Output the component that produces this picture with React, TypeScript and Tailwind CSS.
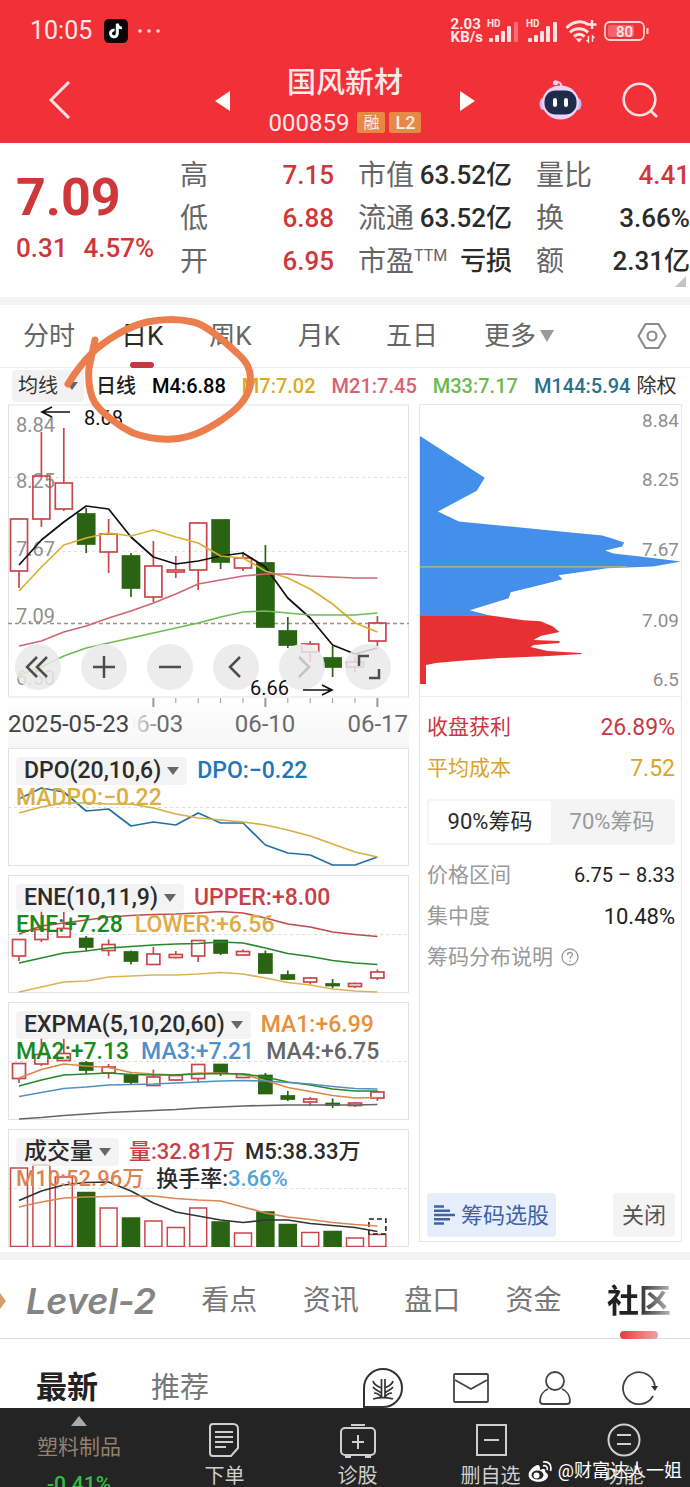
import { ReactNode } from "react";

type Candle = [open: number, close: number, high: number, low: number, up: boolean];

const RED = "#c9474b";
const GREEN = "#2a6412";

const x = (i: number) => 11 + i * 22.4;

const dayCandles: Candle[] = [
    [115, 167, 115, 184, true],
    [72, 115, 28, 123, true],
    [79, 105, 24, 107, true],
    [110, 140, 104, 149, false],
    [130, 148, 115, 169, true],
    [152, 184, 149, 193, false],
    [162, 193, 137, 198, true],
    [166, 168, 152, 174, true],
    [119, 166, 118, 186, true],
    [116, 158, 116, 165, false],
    [154, 164, 148, 167, true],
    [159, 223, 141, 223, false],
    [227, 241, 213, 244, false],
    [240, 248, 237, 258, true],
    [254, 263, 242, 273, false],
    [258, 263, 253, 268, true],
    [219, 237, 212, 242, true],
];

const eneCandles: Candle[] = [
    [64.5, 81, 64.5, 86, true],
    [54.5, 64.5, 35.5, 67, true],
    [53.5, 62, 37, 62, true],
    [63.5, 72, 61, 76, false],
    [69.5, 75.5, 64.5, 81, true],
    [77, 86, 75.5, 89.5, false],
    [79, 89.5, 72, 90, true],
    [79.5, 82.5, 76, 83.5, true],
    [65.5, 81, 65.5, 87, true],
    [65.5, 78, 65.5, 80, false],
    [76.5, 80, 74.5, 81, true],
    [79, 98, 75.5, 98, false],
    [100, 104, 95.5, 105, false],
    [103, 107, 102, 109.5, true],
    [109, 110.5, 104, 113.5, false],
    [108.5, 111.5, 107.5, 113, true],
    [97, 103, 94.5, 105, true],
];

const expmaCandles: Candle[] = [
    [61.5, 76.5, 61.5, 81, true],
    [52.5, 62, 36, 64, true],
    [51.5, 58.5, 36.5, 58.5, true],
    [61, 68, 59, 72, false],
    [65, 71, 62, 76.5, true],
    [73, 80, 71.5, 82, false],
    [75, 83.5, 67.5, 84, true],
    [73.5, 78, 73, 79, true],
    [62.5, 76.5, 62.5, 81, true],
    [62.5, 70.5, 62.5, 74, false],
    [72.5, 75.5, 71, 76, true],
    [73.5, 91.5, 71, 91.5, false],
    [94, 97, 89, 99, false],
    [97, 100, 95, 103.5, true],
    [101.5, 103, 96.5, 106, false],
    [101, 103.5, 100, 105, true],
    [90, 96, 88.5, 99, true],
];

const volumes = [39, 36, 48, 63.5, 79, 89, 92, 98.5, 79, 93, 104, 83, 95.5, 103.5, 102.5, 109, 105.5];

const quotes = [
    { label: "高", value: "7.15", color: "text-[#d0373b]" },
    { label: "市值", value: "63.52亿", color: "text-[#2b2b2b]" },
    { label: "量比", value: "4.41", color: "text-[#d0373b]" },
    { label: "低", value: "6.88", color: "text-[#d0373b]" },
    { label: "流通", value: "63.52亿", color: "text-[#2b2b2b]" },
    { label: "换", value: "3.66%", color: "text-[#2b2b2b]" },
    { label: "开", value: "6.95", color: "text-[#d0373b]" },
    { label: "市盈", sup: "TTM", value: "亏损", color: "text-[#2b2b2b]" },
    { label: "额", value: "2.31亿", color: "text-[#2b2b2b]" },
];

function Line({ points, color }: { points: number[]; color: string }) {
    return (
        <polyline
            points={points.map((y, i) => `${x(i)},${y}`).join(" ")}
            fill="none"
            stroke={color}
            strokeWidth="1.7"
            strokeLinejoin="round"
        />
    );
}

function Candles({ data, width }: { data: Candle[]; width: number }) {
    return (
        <g strokeWidth="1.7">
            {data.map(([top, bottom, high, low, up], i) => {
                const color = up ? RED : GREEN;
                return (
                    <g key={i} stroke={color}>
                        <path d={`M${x(i)} ${high}V${top}M${x(i)} ${bottom}V${low}`} />
                        <rect
                            x={x(i) - width / 2}
                            y={top}
                            width={width}
                            height={bottom - top}
                            fill={up ? "none" : GREEN}
                        />
                    </g>
                );
            })}
        </g>
    );
}

function Caret() {
    return (
        <svg viewBox="0 0 12 8" className="h-2 w-3 shrink-0" aria-hidden="true">
            <path d="M0 0h12L6 8z" fill="#666" />
        </svg>
    );
}

function IndicatorButton({ children }: { children: ReactNode }) {
    return (
        <button className="flex h-7 items-center gap-1.5 rounded bg-[#f0f0f0]/80 px-2 text-[#2b2b2b]">
            {children}
            <Caret />
        </button>
    );
}

function Panel({ top, bottom, children }: { top: ReactNode; bottom: ReactNode; children: ReactNode }) {
    return (
        <section className="relative">
            <svg viewBox="0 0 401 118" className="block w-full">
                <rect x="0.5" y="0.5" width="400" height="117" fill="none" stroke="#e3e3e3" />
                <path d="M0 59.5H401" stroke="#ddd" strokeDasharray="3 3" />
                {children}
            </svg>
            <div className="absolute top-[9px] left-2 text-[23px] leading-[26px] font-medium whitespace-nowrap">
                <div className="flex h-7 items-center gap-2.5">{top}</div>
                <div className="flex gap-3">{bottom}</div>
            </div>
        </section>
    );
}

function SignalBars({ faded }: { faded?: boolean }) {
    return (
        <svg viewBox="0 0 33 24" className="h-6 w-[33px]" fill="#ffe3e3">
            <text x="0" y="8" fontSize="10" fontWeight="700">HD</text>
            <rect x="2" y="19" width="4" height="4" rx="1" />
            <rect x="8" y="16" width="4" height="7" rx="1" />
            <rect x="14" y="12" width="4" height="11" rx="1" />
            <rect x="20" y="7" width="4" height="16" rx="1" />
            <rect x="27" y="3" width="4" height="20" rx="1" opacity={faded ? 0.35 : 1} />
        </svg>
    );
}

function StatusBar() {
    return (
        <div className="flex h-[62px] items-center pr-[41px] pl-[30px] text-[#ffe9e9]">
            <span className="text-[25px]">10:05</span>
            <svg viewBox="0 0 24 24" className="ml-3 size-6">
                <rect width="24" height="24" rx="5" fill="#0d0507" />
                <path d="M13 5v9.500a3.400 3.400 0 1 1-3-3.400" fill="none" stroke="#3ee" strokeWidth="2.600" />
                <path d="M13.500 4.500v10a3.400 3.400 0 1 1-3-3.400M13.500 5c.4 2.600 2 3.900 4.500 4" fill="none" stroke="#fff" strokeWidth="2.600" />
            </svg>
            <svg viewBox="0 0 22 4" className="ml-2.5 h-1 w-[22px]" fill="#ffd8d8">
                <circle cx="2" cy="2" r="1.800" />
                <circle cx="11" cy="2" r="1.800" />
                <circle cx="20" cy="2" r="1.800" />
            </svg>
            <div className="ml-auto flex flex-col text-[15px] leading-[13px] font-bold">
                <span>2.03</span>
                <span>KB/s</span>
            </div>
            <div className="ml-1 flex items-center gap-1.5">
                <SignalBars faded />
                <SignalBars />
                <svg viewBox="0 0 32 26" className="h-[26px] w-8" fill="none" stroke="#ffe3e3" strokeWidth="3">
                    <path d="M1.500 10C8 3 17 2 23 6.500M5 14.500c5-5 13-5 18 0M9 18.500c3.500-3 7-3 10.500 0" />
                    <path d="M10.500 20.500h7L14 24.500z" fill="#ffe3e3" stroke="none" />
                    <path d="M27 2v9M22.500 6.500h9" strokeWidth="2.500" />
                    <path d="M23.500 18v6l-2-2M27.500 24v-6l2 2" strokeWidth="1.400" />
                </svg>
            </div>
            <svg viewBox="0 0 45 20" className="ml-[7px] h-5 w-[45px]">
                <rect x="1" y="1" width="39" height="18" rx="5" fill="none" stroke="#ffd5d5" strokeWidth="1.800" />
                <rect x="4" y="4" width="26" height="12" rx="2" fill="#fff" opacity="0.250" />
                <path d="M43.500 7v6" stroke="#ffd5d5" strokeWidth="2" />
                <text x="20.500" y="15.500" fontSize="15" fontWeight="500" textAnchor="middle" fill="#ffe9e9">80</text>
            </svg>
        </div>
    );
}

function Header() {
    return (
        <header className="bg-[#f23037]">
            <StatusBar />
            <div className="grid h-[81px] grid-cols-[1fr_260px_1fr] items-center">
                <button aria-label="返回" className="ml-12 w-6 pb-1.5">
                    <svg viewBox="0 0 24 38" className="h-[38px] w-6" fill="none" stroke="#ffe3e3" strokeWidth="3">
                        <path d="M21 1 3 19l18 18" />
                    </svg>
                </button>
                <div className="flex items-center justify-between">
                    <button aria-label="上一只" className="pb-1">
                        <svg viewBox="0 0 15 20" className="h-5 w-[15px]"><path d="M15 0v20L0 10z" fill="#fff" /></svg>
                    </button>
                    <div className="flex flex-col items-center text-[#ffe9e9]">
                        <h1 className="text-[29px] leading-10 font-medium">国风新材</h1>
                        <div className="flex h-10 items-center gap-1">
                            <span className="mr-1 text-2xl">000859</span>
                            <span className="flex h-[21px] w-7 items-center justify-center rounded-xs bg-[#e68945] text-base">融</span>
                            <span className="flex h-[21px] w-8 items-center justify-center rounded-xs bg-[#e68945] text-lg font-medium">L2</span>
                        </div>
                    </div>
                    <button aria-label="下一只" className="pb-1">
                        <svg viewBox="0 0 15 20" className="h-5 w-[15px]"><path d="M0 0v20l15-10z" fill="#fff" /></svg>
                    </button>
                </div>
                <div className="flex items-center justify-end gap-10 pr-8 pb-1.5">
                    <button aria-label="智能助手">
                        <svg viewBox="0 0 43 40" className="h-10 w-[43px]">
                            <path d="M16 2.500c4-1 6 0 6.500 4" fill="none" stroke="#f6c9e8" strokeWidth="2" />
                            <circle cx="16.500" cy="2.800" r="2.500" fill="#f6d5ee" />
                            <ellipse cx="4" cy="24" rx="3.500" ry="6" fill="#c8b8f5" />
                            <ellipse cx="39" cy="24" rx="3.500" ry="6" fill="#c8b8f5" />
                            <ellipse cx="21.500" cy="22.500" rx="18.500" ry="17" fill="#ecd3fa" />
                            <rect x="5.500" y="10.500" width="32" height="24" rx="11" fill="#1f2b4a" />
                            <rect x="14" y="18" width="4" height="9" rx="2" fill="#fff" />
                            <rect x="25" y="18" width="4" height="9" rx="2" fill="#fff" />
                        </svg>
                    </button>
                    <button aria-label="搜索">
                        <svg viewBox="0 0 36 36" className="size-9" fill="none" stroke="#ffe3e3" strokeWidth="2.600">
                            <circle cx="17.500" cy="17.500" r="15.800" />
                            <path d="m28 28 7 7" />
                        </svg>
                    </button>
                </div>
            </div>
        </header>
    );
}

function Quote() {
    return (
        <section className="relative flex pt-[11px] pb-[14px]">
            <div className="w-[180px] shrink-0 pl-4 text-[#d0373b]">
                <div className="pt-3.5 text-[52px] leading-[60px] font-bold">7.09</div>
                <div className="flex gap-4 text-[26px] leading-10 font-medium">
                    <span>0.31</span>
                    <span>4.57%</span>
                </div>
            </div>
            <dl className="grid flex-1 grid-cols-3 gap-x-6 text-[26px] leading-[43px]">
                {quotes.map((q) => (
                    <div key={q.label} className="flex h-[43px] justify-between whitespace-nowrap">
                        <dt className="flex text-[28px] text-[#666]">
                            {q.label}
                            {q.sup && <span className="text-base leading-8">{q.sup}</span>}
                        </dt>
                        <dd className={`font-medium ${q.color}`}>{q.value}</dd>
                    </div>
                ))}
            </dl>
            <svg viewBox="0 0 11 11" className="absolute right-1 bottom-2.5 size-[11px]">
                <path d="M11 0v11H0z" fill="#c4c4c4" />
            </svg>
        </section>
    );
}

function PeriodTabs() {
    return (
        <nav className="flex h-[63px] items-center gap-[46px] border-b border-[#ededed] px-[23px] text-[26px] text-[#666]">
            <button>分时</button>
            <button className="relative text-[#2b2b2b]">
                日K
                <span className="absolute -bottom-3 left-1/2 h-1.5 w-6 -translate-x-1/2 rounded-full bg-[#c93541]" />
            </button>
            <button>周K</button>
            <button>月K</button>
            <button>五日</button>
            <button className="flex items-center gap-1">
                更多
                <svg viewBox="0 0 14 12" className="h-3 w-3.5"><path d="M0 0h14L7 12z" fill="#999" /></svg>
            </button>
            <button aria-label="设置" className="ml-auto">
                <svg viewBox="0 0 30 28" className="h-7 w-[30px]" fill="none" stroke="#8c8c8c" strokeWidth="2.200">
                    <path d="M8.500 2h13l7 12-7 12h-13l-7-12z" strokeLinejoin="round" />
                    <circle cx="15" cy="14" r="4.500" />
                </svg>
            </button>
        </nav>
    );
}

function AverageRow() {
    return (
        <div className="flex h-9 items-center gap-4 px-3 text-xl font-medium whitespace-nowrap">
            <button className="-mr-1 flex h-8 items-center gap-2 rounded bg-[#f2f2f2] px-1.5 font-normal text-[#333]">
                均线
                <Caret />
            </button>
            <span className="text-[#222]">日线</span>
            <span className="text-black">M4:6.88</span>
            <span className="text-[#dcaa20]">M7:7.02</span>
            <span className="text-[#da6274]">M21:7.45</span>
            <span className="text-[#6cb950]">M33:7.17</span>
            <span className="text-[#2c7090]">M144:5.94</span>
            <button className="-ml-2.5 font-normal text-[#333]">除权</button>
        </div>
    );
}

function DayChart() {
    return (
        <div className="relative">
            <svg viewBox="0 0 401 344" className="block w-full">
                <defs>
                    <linearGradient id="axis" x1="0" y1="0" x2="0" y2="1">
                        <stop offset="0" stopColor="#fff" />
                        <stop offset="1" stopColor="#f6f6f6" />
                    </linearGradient>
                    <linearGradient id="fade">
                        <stop offset="0.830" stopColor="#fafafa" />
                        <stop offset="0.860" stopColor="#fafafa" stopOpacity="0.800" />
                        <stop offset="1" stopColor="#fafafa" stopOpacity="0.200" />
                    </linearGradient>
                </defs>
                <rect y="293" width="401" height="51" fill="url(#axis)" />
                <rect x="0.500" y="1" width="400" height="292" fill="none" stroke="#e3e3e3" />
                <path d="M0 73.500H401M0 147.500H401" stroke="#e2e2e2" strokeDasharray="3 3" />
                <g fontSize="20" fill="#8f8f8f">
                    <text x="8" y="28">8.84</text>
                    <text x="8" y="84">8.25</text>
                    <text x="8" y="152">7.67</text>
                    <text x="8" y="219">7.09</text>
                    <text x="8" y="281">6.50</text>
                </g>
                <path d="M0 219.500H401" stroke="#a38f80" strokeWidth="1.500" strokeDasharray="4 3" />
                <Candles data={dayCandles} width={17} />
                <Line color="#111" points={[161, 136, 118, 102, 105, 133, 153, 160, 157, 152, 149, 163, 194, 214, 241, 250, 244]} />
                <Line color="#dab02f" points={[187, 163, 141, 134, 129, 132, 126, 133, 139, 152, 154, 167, 174, 185, 200, 219, 228]} />
                <Line color="#cf6874" points={[242, 237, 228, 222, 214, 207, 199, 190, 180, 176, 172, 170, 170, 172, 173, 174, 174]} />
                <Line color="#6dbb55" points={[271, 263, 252, 244, 239, 234, 229, 224, 219, 213, 208, 207, 209, 211, 211, 211, 209]} />
                {[6, 7, 8, 9, 10, 11, 12, 13, 14, 15, 16].map((i) => (
                    <path key={i} d={`M${x(i)} 294v${i % 5 === 1 ? 9 : 5}`} stroke="#999" strokeWidth={i % 5 === 1 ? 2 : 1} />
                ))}
                <g fontSize="24" fill="#6b6b6b">
                    <text x="145" y="328" textAnchor="middle">06-03</text>
                    <text x="257" y="328" textAnchor="middle">06-10</text>
                    <text x="400" y="328" textAnchor="end">06-17</text>
                    <rect y="306" width="150" height="26" fill="url(#fade)" />
                    <text x="0" y="328" fill="#444">2025-05-23</text>
                </g>
            </svg>
            <div className="absolute top-[240px] left-[7px] flex gap-5">
                {[
                    ["最早", "m22 13-10 10 10 10M32 13 22 23l10 10"],
                    ["放大", "M23 12v22M12 23h22"],
                    ["缩小", "M12 23h22"],
                    ["向左", "M27 13 17 23l10 10"],
                    ["向右", "m20 13 10 10-10 10"],
                    ["全屏", "M14 22V12h10M34 25v9H24"],
                ].map(([label, d]) => (
                    <button key={label} aria-label={label} className="size-[46px] rounded-full bg-[#e9e9e9]/85">
                        <svg
                            viewBox="0 0 46 46"
                            fill="none"
                            stroke={label === "向右" ? "#c4c4c4" : "#4d4d4d"}
                            strokeWidth="2.500"
                        >
                            <path d={d} />
                        </svg>
                    </button>
                ))}
            </div>
            <svg viewBox="0 0 401 344" className="pointer-events-none absolute inset-0 w-full" fill="none" stroke="#111" strokeWidth="1.700">
                <g fontSize="20" fill="#111" stroke="none">
                    <text x="76" y="21">8.68</text>
                    <text x="242" y="291">6.66</text>
                </g>
                <path d="M62 8H34m10-5-10 5 10 5M295 286h29m-10-5 10 5-10 5" />
            </svg>
        </div>
    );
}

function Indicators() {
    return (
        <div className="flex flex-col gap-[9px]">
            <Panel
                top={
                    <>
                        <IndicatorButton>DPO(20,10,6)</IndicatorButton>
                        <span className="text-[#1f76bb]">DPO:−0.22</span>
                    </>
                }
                bottom={<span className="text-[#dcae40]">MADPO:−0.22</span>}
            >
                <Line color="#2370a6" points={[51, 40, 44, 63, 61, 78, 74, 77, 65, 75, 75, 97, 105, 107, 117, 117, 109]} />
                <Line color="#d5ae46" points={[65, 59, 55, 55, 56, 56, 60, 66, 70, 72, 74, 77, 82, 88, 96, 104, 109]} />
            </Panel>
            <Panel
                top={
                    <>
                        <IndicatorButton>ENE(10,11,9)</IndicatorButton>
                        <span className="text-[#c93f48]">UPPER:+8.00</span>
                    </>
                }
                bottom={
                    <>
                        <span className="text-[#168a1b]">ENE:+7.28</span>
                        <span className="text-[#e0ab45]">LOWER:+6.56</span>
                    </>
                }
            >
                <Candles data={eneCandles} width={13} />
                <Line color="#c04a50" points={[59, 51, 48, 45, 42, 40.5, 39.5, 39, 38, 36.5, 38, 43, 49, 52, 57, 59.5, 61.5]} />
                <Line color="#238a2b" points={[88, 83, 78, 76, 73, 71.5, 70, 69, 68.5, 67, 68, 73, 78.5, 81.5, 85.5, 88, 89.5]} />
                <Line color="#deb254" points={[117, 112, 107, 106, 102, 101, 100, 100, 99, 97.5, 99, 103, 107.5, 110, 114, 116, 117]} />
            </Panel>
            <Panel
                top={
                    <>
                        <IndicatorButton>EXPMA(5,10,20,60)</IndicatorButton>
                        <span className="text-[#e88f3c]">MA1:+6.99</span>
                    </>
                }
                bottom={
                    <>
                        <span className="text-[#168a1b]">MA2:+7.13</span>
                        <span className="text-[#4f8fca]">MA3:+7.21</span>
                        <span className="text-[#666]">MA4:+6.75</span>
                    </>
                }
            >
                <Candles data={expmaCandles} width={13} />
                <Line color="#dd8744" points={[76, 67.5, 62, 64, 65.5, 70.5, 72, 73, 71, 71, 72.5, 78.5, 85.5, 89.5, 93.5, 96, 95.5]} />
                <Line color="#238a2b" points={[84, 78, 73, 72, 71, 72.5, 73, 73, 72, 71.5, 72, 75, 80, 83, 87, 89, 89]} />
                <Line color="#5590c4" points={[94.5, 90.5, 86.5, 85, 83, 82.5, 82, 81, 80, 79, 78.5, 79, 80.5, 82, 84.5, 86.5, 87]} />
                <Line color="#666" points={[117, 115.5, 113.5, 112, 110.5, 109.5, 108.5, 107.5, 106, 105, 104, 103.5, 103, 103, 103, 103, 102.5]} />
            </Panel>
            <Panel
                top={
                    <>
                        <IndicatorButton>成交量</IndicatorButton>
                        <span className="text-[22px] text-[#c93f48]">量:32.81万</span>
                        <span className="text-[22px] text-[#2b2b2b]">M5:38.33万</span>
                    </>
                }
                bottom={
                    <>
                        <span className="text-[22px] text-[#de8350]">M10:52.96万</span>
                        <span className="text-[22px] text-[#2b2b2b]">
                            换手率:<span className="text-[#50a5d5]">3.66%</span>
                        </span>
                    </>
                }
            >
                {volumes.map((top, i) => (
                    <rect
                        key={i}
                        x={x(i) - 8.5}
                        y={top}
                        width="17"
                        height={117.5 - top}
                        fill={dayCandles[i][4] ? "none" : GREEN}
                        stroke={dayCandles[i][4] ? RED : GREEN}
                        strokeWidth="1.500"
                    />
                ))}
                <rect x={x(16) - 8.5} y="90" width="17" height="15" fill="none" stroke="#222" strokeWidth="1.600" strokeDasharray="5 3" />
                <Line color="#333" points={[71.5, 62, 56, 53.5, 53, 62, 74, 83, 87, 91, 93.5, 91, 91, 94.5, 96.5, 98.5, 102.5]} />
                <Line color="#db8654" points={[78, 73, 69, 68, 67.5, 67, 67, 69.5, 71, 72, 78, 84, 88, 90.5, 93.5, 95.5, 97]} />
            </Panel>
        </div>
    );
}

function ChipPanel() {
    return (
        <aside className="mb-[5px] flex flex-col border border-[#e6e6e6] text-[21px]">
            <svg viewBox="0 0 262 292" className="block w-full border-b border-[#ececec]">
                <path
                    fill="#458fec"
                    d="M0 31 65 73 57 86 18 107 39 117 91 122 141 127 183 131 193 134 205 138 203 142 186 146 194 149 221 152 262 157 234 162 188 164 139 171 143 175 124 180 91 188 89 194 50 206 69 211H0z"
                />
                <path
                    fill="#e63032"
                    d="M0 211H69L104 216 121 217 133 222 140 228 121 232 114 236 140 237V239L114 241 111 243 128 247 162 249V250L129 252 81 254 38 257 16 259 6 261V280H0z"
                />
                <path d="M0 162.500H208" stroke="#c5bb78" strokeWidth="1.300" />
                <g fontSize="19" fill="#8f8f8f" textAnchor="end">
                    <text x="260" y="22">8.84</text>
                    <text x="260" y="81">8.25</text>
                    <text x="260" y="152">7.67</text>
                    <text x="260" y="223">7.09</text>
                    <text x="260" y="282">6.5</text>
                </g>
            </svg>
            <div className="flex flex-1 flex-col pt-[10px] pr-1.5 pb-1 pl-[7px]">
                <div className="flex justify-between leading-[41px] text-[#ca3743]">
                    <span>收盘获利</span>
                    <span className="text-[23px]">26.89%</span>
                </div>
                <div className="flex justify-between leading-[41px] text-[#d9a42c]">
                    <span>平均成本</span>
                    <span className="text-[23px]">7.52</span>
                </div>
                <div className="my-2.5 flex h-[46px] rounded bg-[#f4f4f4] p-0.5 text-[22px]">
                    <button className="flex-1 rounded-xs bg-white text-[#2b2b2b]">90%筹码</button>
                    <button className="flex-1 text-[#999]">70%筹码</button>
                </div>
                <div className="flex justify-between leading-[41px] text-[#999]">
                    <span>价格区间</span>
                    <span className="text-[20px] text-[#222]">6.75 – 8.33</span>
                </div>
                <div className="flex justify-between leading-[41px] text-[#999]">
                    <span>集中度</span>
                    <span className="text-[22px] text-[#222]">10.48%</span>
                </div>
                <button className="flex items-center gap-2 leading-[41px] text-[#999]">
                    筹码分布说明
                    <svg viewBox="0 0 18 18" className="size-[18px]" fill="none" stroke="#999" strokeWidth="1.300">
                        <circle cx="9" cy="9" r="8" />
                        <path d="M6.500 7c0-3.400 5-3.200 5-.3 0 2-2.500 1.800-2.500 4M9 12.500v1.500" />
                    </svg>
                </button>
                <div className="mt-auto flex justify-between text-[22px]">
                    <button className="flex h-11 items-center gap-1.5 rounded bg-[#e6edfb] px-[7px] text-[#3c64a6]">
                        <svg viewBox="0 0 21 20" className="h-5 w-[21px]" stroke="#3c64a6" strokeWidth="2.400">
                            <path d="M0 1.500h10M0 5.700h16M0 10h21M0 14.300h16M0 18.500h10" />
                        </svg>
                        筹码选股
                    </button>
                    <button className="h-11 rounded bg-[#f4f4f4] px-[9px] text-[#555]">关闭</button>
                </div>
            </div>
        </aside>
    );
}

function SectionTabs() {
    return (
        <nav className="flex h-[79px] items-center justify-between border-b border-[#ddd] pt-1 pr-[19px] text-[28px] text-[#777]">
            <div className="flex items-center gap-5">
                <svg viewBox="0 0 6 18" className="h-[18px] w-1.5"><path d="M0 1 6 9 0 17z" fill="#d3a06c" /></svg>
                <button className="font-[Inter,sans-serif] text-4xl font-semibold italic text-[#858585]">Level-2</button>
            </div>
            <button>看点</button>
            <button>资讯</button>
            <button>盘口</button>
            <button>资金</button>
            <button className="relative bg-linear-to-r from-[#222] from-45% to-[#bbb] bg-clip-text text-[32px] font-bold text-transparent">
                社区
                <span className="absolute -bottom-3.5 left-1/2 h-2 w-[38px] -translate-x-1/2 rounded-full bg-linear-to-r from-[#e0393d] to-[#f0a0a2]" />
            </button>
        </nav>
    );
}

function FeedBar() {
    return (
        <div className="flex h-[69px] items-end overflow-hidden pr-8 pl-9">
            <button className="text-[31px] leading-10 font-bold text-[#222]">最新</button>
            <button className="ml-[53px] text-[29px] leading-10 text-[#777]">推荐</button>
            <div className="ml-auto flex h-10 items-center gap-[50px]">
                <button aria-label="话题">
                    <svg viewBox="0 0 40 40" className="size-10" fill="none" stroke="#333" strokeWidth="2">
                        <path d="M1 39V20A19 19 0 1 1 20 39z" />
                        <path d="M18.500 11v19M22 11v19M10 31c7-2 13-2 20 0M10 13c1 4 4 5 8 7M10 19c2 3 5 3 8 6M11 25c3 0 5 1 7 4M30 13c-1 4-4 5-8 7M30 19c-2 3-5 3-8 6M29 25c-3 0-5 1-7 4" strokeWidth="1.700" />
                    </svg>
                </button>
                <button aria-label="消息">
                    <svg viewBox="0 0 36 30" className="h-[30px] w-9" fill="none" stroke="#444" strokeWidth="1.800">
                        <rect x="1" y="1" width="34" height="28" rx="1" />
                        <path d="m2 7 16 9 16-9" />
                    </svg>
                </button>
                <button aria-label="我的">
                    <svg viewBox="0 0 32 34" className="h-[34px] w-8" fill="none" stroke="#444" strokeWidth="1.800">
                        <circle cx="16" cy="10" r="9" />
                        <path d="M9 18C4 20 1 25 1 30q0 3 3 3h24q3 0 3-3c0-5-3-10-8-12" />
                    </svg>
                </button>
                <button aria-label="刷新">
                    <svg viewBox="0 0 37 34" className="h-[34px] w-[37px]" fill="none" stroke="#444" strokeWidth="1.800">
                        <path d="M32 25A16 16 0 1 1 34 16" />
                        <path d="M30 15h7l-3 5z" fill="#333" stroke="none" />
                    </svg>
                </button>
            </div>
        </div>
    );
}

function BottomItem({ label, children }: { label: string; children: ReactNode }) {
    return (
        <button className="flex flex-col items-center gap-1 pt-3.5 text-xl leading-7 text-[#d0d0d0]">
            <svg viewBox="0 0 36 36" className="size-9" fill="none" stroke="#cfcfcf" strokeWidth="2">
                {children}
            </svg>
            {label}
        </button>
    );
}

function BottomBar() {
    return (
        <footer className="relative grid h-[79px] grid-cols-[158fr_133fr_133fr_133fr_133fr] items-start overflow-hidden bg-[#242424]">
            <button className="flex flex-col items-center pt-2 text-[21px]">
                <svg viewBox="0 0 16 10" className="h-2.5 w-4"><path d="M8 0l8 10H0z" fill="#aaa" /></svg>
                <span className="mt-1 leading-[34px] text-[#93816f]">塑料制品</span>
                <span className="mt-0.5 leading-9 font-medium text-[#35bd43]">-0.41%</span>
            </button>
            <BottomItem label="下单">
                <path d="M6 2h20q5 0 5 5v19l-7 8H6q-3 0-3-3V5q0-3 3-3zM8 10h18M8 15h18M8 20h18M8 25h11" />
            </BottomItem>
            <BottomItem label="诊股">
                <rect x="1" y="6" width="34" height="27" rx="4" />
                <path d="M11 3h14M18 13v14M12 20h12M5 35h6M25 35h6" />
            </BottomItem>
            <BottomItem label="删自选">
                <path d="M4 3h29v30H4zM11 18h15" />
            </BottomItem>
            <BottomItem label="功能">
                <circle cx="18" cy="18" r="15.500" />
                <path d="M11 13h14M11 22h14" />
            </BottomItem>
            <div className="absolute right-2 bottom-1 flex items-center gap-1.5 text-[18px] leading-6 text-white">
                <svg viewBox="0 0 24 22" className="h-[22px] w-6">
                    <path d="M9 5C4 7-1 13 1 17c3 7 18 6 19-1 0-2-1-3-3-4 1-3-1-4-5-2 0-3 0-5-3-5z" fill="#fff" />
                    <ellipse cx="9.500" cy="15" rx="6" ry="4.500" fill="#242424" />
                    <circle cx="8.500" cy="15.500" r="3" fill="#fff" />
                    <path d="M15 6c3-1 5 1 4 4M15 2c6-1 9 3 7.500 9" fill="none" stroke="#fff" strokeWidth="1.700" />
                </svg>
                @财富达人一姐
            </div>
        </footer>
    );
}

export default function App() {
    return (
        <div className="relative overflow-hidden bg-white font-[Roboto,'Noto_Sans_CJK_SC',sans-serif]">
            <Header />
            <Quote />
            <div className="h-2 bg-[#f3f3f3]" />
            <PeriodTabs />
            <AverageRow />
            <main className="grid grid-cols-[minmax(0,401fr)_minmax(0,263fr)] gap-2.5 px-2 pb-[5px]">
                <div>
                    <DayChart />
                    <Indicators />
                </div>
                <ChipPanel />
            </main>
            <div className="h-2 bg-[#f3f3f3]" />
            <SectionTabs />
            <FeedBar />
            <BottomBar />
            <svg
                viewBox="0 0 200 130"
                className="pointer-events-none absolute top-[315px] left-[60px] h-[130px] w-[200px]"
                fill="none"
                stroke="#ec7d4d"
                strokeWidth="7"
                strokeLinecap="round"
                strokeLinejoin="round"
            >
                <path d="M8 69C16 56 24 46 33 37 45 26 66 12 87 7 102 4 120 4 133 7 147 10 165 27 177 38 186 46 192 54 190 68 189 85 174 97 157 108 142 117 130 123 112 124 96 125 84 122 73 118 58 111 42 98 35 88 29 78 28 66 29 53L35 25" />
            </svg>
        </div>
    );
}
